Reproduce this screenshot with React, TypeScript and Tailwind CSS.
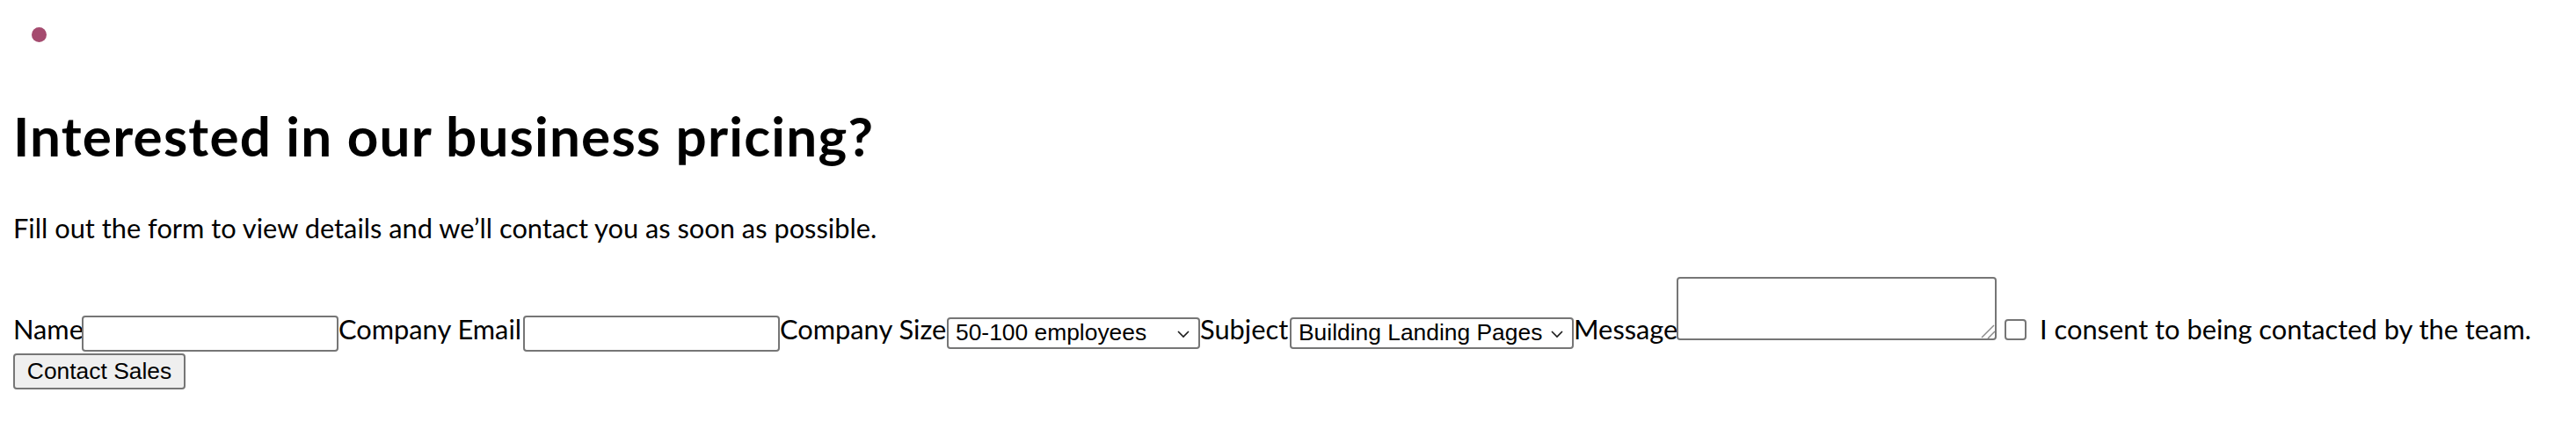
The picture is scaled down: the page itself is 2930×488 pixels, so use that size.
function Chevron() {
  return (
    <svg width="14" height="9" viewBox="0 0 14 9" className="absolute right-[10px] top-[13px]">
      <polyline points="1,1 7,7 13,1" fill="none" stroke="#1a1a1a" strokeWidth="1.6" />
    </svg>
  );
}

function FakeSelect({ value, width }: { value: string; width: string }) {
  return (
    <div
      className={`relative mt-[46px] h-[36px] ${width} shrink-0 flex items-center rounded-[4px] border-2 border-[#767676] bg-white pl-[8px] font-['Liberation_Sans',Arial,sans-serif] text-[26.4px] leading-normal text-black whitespace-nowrap`}
    >
      {value}
      <Chevron />
    </div>
  );
}

export default function App() {
  return (
    <div className="min-h-screen bg-white text-black font-['Lato',sans-serif]">
      <div className="ml-[36px] pt-[31px]">
        <div className="h-[17px] w-[17px] rounded-full bg-[#a54b6f]" />
      </div>
      <h1 className="mt-[76px] pl-[15px] text-[62px] leading-[61px] tracking-[1.2px] font-bold whitespace-nowrap">
        Interested in our business pricing?
      </h1>
      <p className="mt-[59px] pl-[15px] text-[30.8px] leading-[31px] whitespace-nowrap">
        Fill out the form to view details and we’ll contact you as soon as possible.
      </p>
      <form className="mt-[40px] px-[15px]">
        <div className="flex items-start text-[30.8px] leading-[31px] whitespace-nowrap">
          <label className="mt-[44px] w-[78px] shrink-0">Name</label>
          <input
            type="text"
            className="mt-[44px] h-[41px] w-[292px] shrink-0 rounded-[4px] border-2 border-[#767676] bg-white"
          />
          <label className="mt-[44px] w-[210px] shrink-0">Company Email</label>
          <input
            type="email"
            className="mt-[44px] h-[41px] w-[292px] shrink-0 rounded-[4px] border-2 border-[#767676] bg-white"
          />
          <label className="mt-[44px] w-[190px] shrink-0">Company Size</label>
          <FakeSelect value="50-100 employees" width="w-[288px]" />
          <label className="mt-[44px] w-[102px] shrink-0">Subject</label>
          <FakeSelect value="Building Landing Pages" width="w-[323px]" />
          <label className="mt-[44px] w-[117px] shrink-0">Message</label>
          <div className="relative h-[72px] w-[364px] shrink-0">
            <textarea className="block h-[72px] w-[364px] resize-none rounded-[4px] border-2 border-[#767676] bg-white" />
            <svg width="16" height="16" viewBox="0 0 16 16" className="pointer-events-none absolute bottom-[2px] right-[2px]">
              <line x1="1" y1="15" x2="15" y2="1" stroke="#8a8a8a" strokeWidth="1.5" />
              <line x1="8" y1="16" x2="16" y2="8" stroke="#8a8a8a" strokeWidth="1.5" />
            </svg>
          </div>
          <div className="ml-[9px] mt-[48px] h-[24px] w-[25px] shrink-0 rounded-[4px] border-2 border-[#767676] bg-white" />
          <label className="ml-[15px] mt-[44px] shrink-0">I consent to being contacted by the team.</label>
        </div>
        <button
          type="submit"
          className="mt-[2px] flex h-[41px] w-[196px] items-center justify-center rounded-[4px] border-2 border-[#767676] bg-[#efefef] font-['Liberation_Sans',Arial,sans-serif] text-[26.4px] leading-normal text-black"
        >
          Contact Sales
        </button>
      </form>
    </div>
  );
}
